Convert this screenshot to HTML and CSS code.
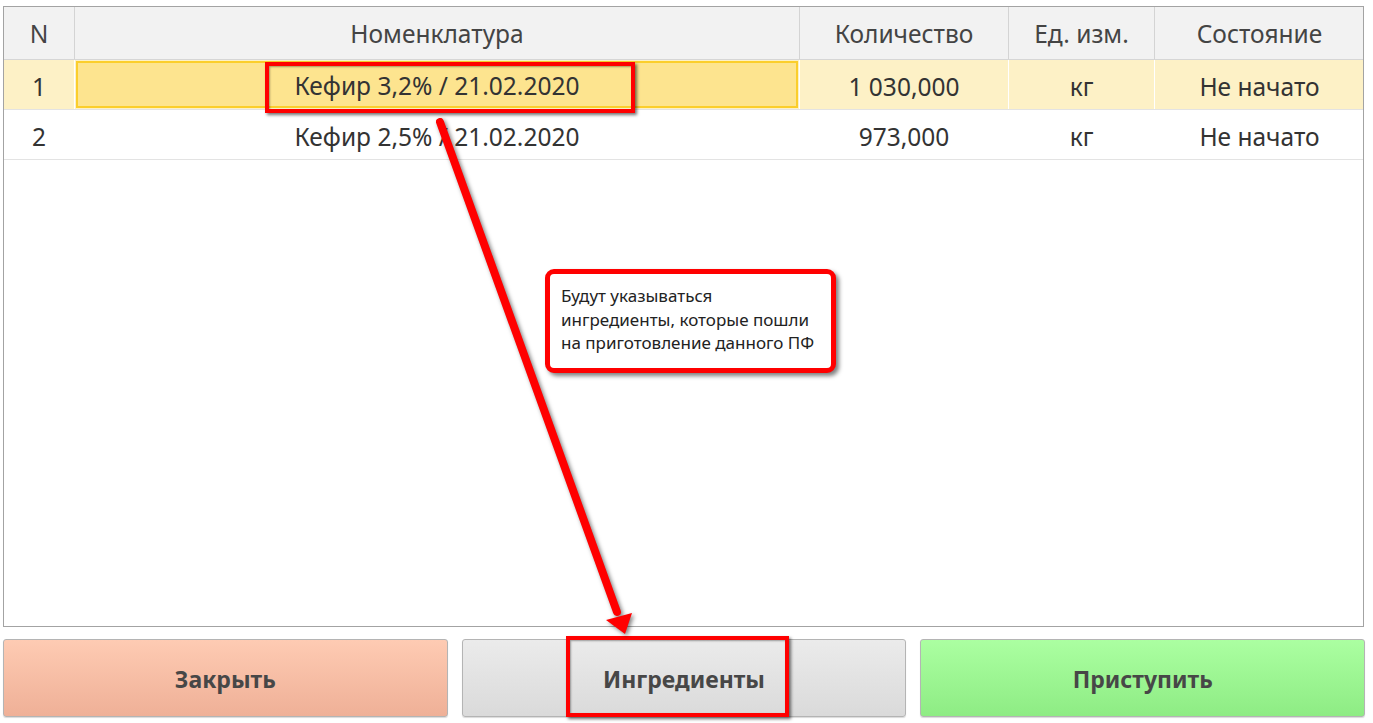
FILE: index.html
```html
<!DOCTYPE html>
<html lang="ru">
<head>
<meta charset="utf-8">
<title>Номенклатура</title>
<link rel="stylesheet" href="styles.css">
</head>
<body>
<div class="page">
  <div class="table">
    <div class="row head">
      <div class="cell c-n">N</div>
      <div class="cell c-name">Номенклатура</div>
      <div class="cell c-qty">Количество</div>
      <div class="cell c-unit">Ед. изм.</div>
      <div class="cell c-state">Состояние</div>
    </div>
    <div class="row sel">
      <div class="cell c-n">1</div>
      <div class="cell c-name"><div class="focus">Кефир 3,2% / 21.02.2020</div></div>
      <div class="cell c-qty">1 030,000</div>
      <div class="cell c-unit">кг</div>
      <div class="cell c-state">Не начато</div>
    </div>
    <div class="row">
      <div class="cell c-n">2</div>
      <div class="cell c-name">Кефир 2,5% / 21.02.2020</div>
      <div class="cell c-qty">973,000</div>
      <div class="cell c-unit">кг</div>
      <div class="cell c-state">Не начато</div>
    </div>
  </div>
  <div class="buttons">
    <button class="btn btn-close">Закрыть</button>
    <button class="btn btn-ingr">Ингредиенты</button>
    <button class="btn btn-go">Приступить</button>
  </div>

  <div class="mark mark-row"></div>
  <div class="mark mark-btn"></div>
  <div class="callout">Будут указываться ингредиенты, которые пошли на приготовление данного ПФ</div>
  <svg class="arrow" width="1373" height="723" viewBox="0 0 1373 723">
    <line x1="440" y1="122" x2="617" y2="612" stroke="#ff0000" stroke-width="8" stroke-linecap="round"/>
    <polygon points="625,634 606,620 632,613" fill="#ff0000"/>
  </svg>
</div>
</body>
</html>
```
FILE: styles.css
```css
* { box-sizing: border-box; }
html, body { margin: 0; padding: 0; background: #fff; }
body {
  font-family: "Noto Sans", "Open Sans", "DejaVu Sans", sans-serif;
  color: #333;
}
.page {
  position: relative;
  width: 1373px;
  height: 723px;
  padding: 6px 9px 0 3px;
}
.table {
  border: 1px solid #a3a3a3;
  height: 621px;
  background: #fff;
}
.row {
  display: grid;
  grid-template-columns: 71px 725px 209px 146px 209px;
  height: 50px;
  border-bottom: 1px solid #e3e3e3;
}
.row.head {
  height: 53px;
  background: #f2f2f2;
  border-bottom: 1px solid #d6d6d6;
}
.cell {
  display: flex;
  align-items: center;
  justify-content: center;
  font-size: 24.5px;
  padding-top: 3px;
  border-right: 1px solid #fff;
  white-space: nowrap;
}
.cell:last-child { border-right: none; }
.head .cell {
  border-right: 1px solid #d4d4d4;
  color: #444;
  padding-top: 1px;
}
.head .cell:last-child { border-right: none; }
.sel { background: #fdf1c6; }
.sel .c-name { padding: 1px; }
.focus {
  width: 100%;
  height: 100%;
  background: #fde48f;
  border: 2px solid #fbce2c;
  display: flex;
  align-items: center;
  justify-content: center;
  padding-top: 2px;
}
.buttons {
  display: flex;
  gap: 14px;
  width: 1362px;
  margin-top: 12px;
}
.btn {
  flex: 1;
  height: 78px;
  border: 1px solid #b4b4b4;
  border-radius: 3px;
  font-family: "Noto Sans", "Open Sans", sans-serif;
  font-weight: 700;
  font-size: 23px;
  color: #474747;
  box-shadow: 0 1px 1px rgba(0,0,0,0.15);
  padding: 1px 0 0 0;
}
.btn-close { background: linear-gradient(#fecbb3, #efb097); }
.btn-ingr { background: linear-gradient(#ebebeb, #dadada); }
.btn-go { background: linear-gradient(#abffa1, #8eec84); }

.mark {
  position: absolute;
  border: 4px solid #ff0000;
  box-shadow: 2px 2px 3px rgba(0,0,0,0.55), inset 1px 1px 2px rgba(0,0,0,0.35);
}
.mark-row { left: 265px; top: 62px; width: 370px; height: 51px; }
.mark-btn { left: 566px; top: 636px; width: 223px; height: 81px; }
.callout {
  position: absolute;
  left: 545px;
  top: 269px;
  width: 291px;
  height: 104px;
  border: 5px solid #ff0000;
  border-radius: 9px;
  background: #fff;
  box-shadow: 3px 3px 4px rgba(0,0,0,0.5);
  padding: 10px 8px 0 11px;
  font-family: "Noto Sans", "Open Sans", sans-serif;
  font-size: 17px;
  line-height: 23.5px;
  color: #222;
}
.arrow {
  position: absolute;
  left: 0;
  top: 0;
  filter: drop-shadow(2px 2px 2px rgba(0,0,0,0.5));
  pointer-events: none;
}
```
